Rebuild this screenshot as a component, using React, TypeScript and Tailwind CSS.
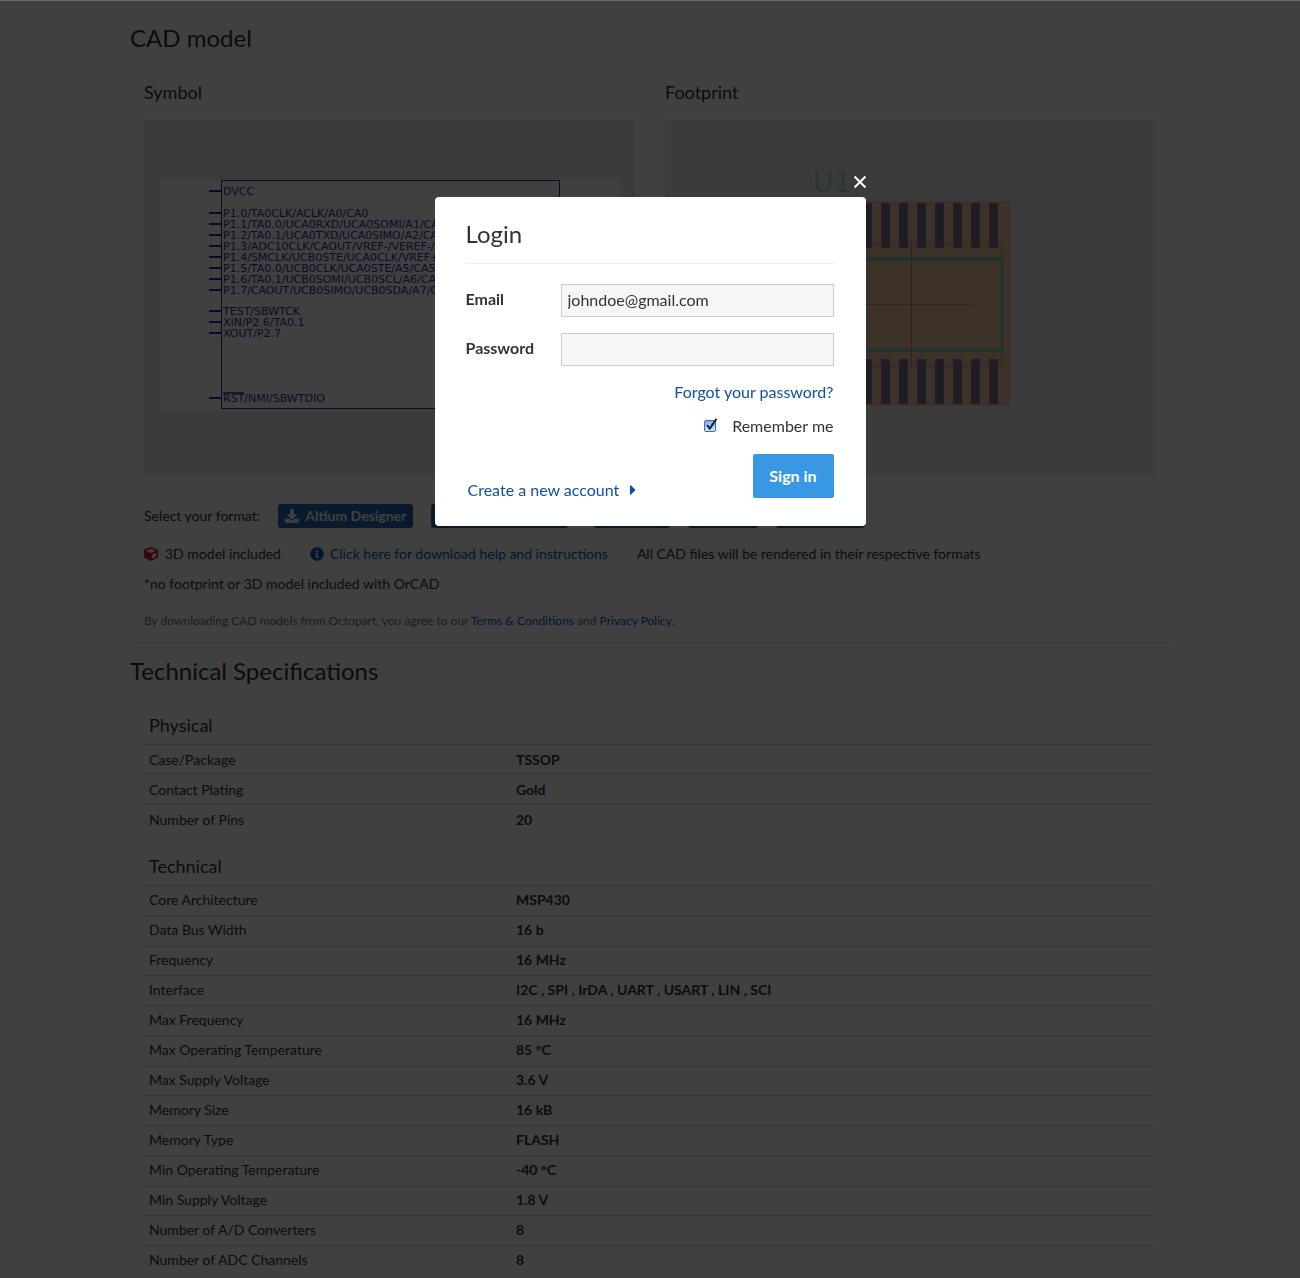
import { FaCaretRight, FaCube, FaDownload, FaInfoCircle } from "react-icons/fa";

const formats = [
  { name: "Altium Designer", className: "w-[135px]" },
  { name: "Cadence Allegro", className: "w-[137px] mr-2" },
  { name: "OrCAD", className: "w-[76px]" },
  { name: "KiCad", className: "w-[70px]" },
  { name: "Eagle", className: "w-[89px]" },
];

const specGroups = [
  {
    title: "Physical",
    rows: [
      ["Case/Package", "TSSOP"],
      ["Contact Plating", "Gold"],
      ["Number of Pins", "20"],
    ],
  },
  {
    title: "Technical",
    rows: [
      ["Core Architecture", "MSP430"],
      ["Data Bus Width", "16 b"],
      ["Frequency", "16 MHz"],
      ["Interface", "I2C , SPI , IrDA , UART , USART , LIN , SCI"],
      ["Max Frequency", "16 MHz"],
      ["Max Operating Temperature", "85 °C"],
      ["Max Supply Voltage", "3.6 V"],
      ["Memory Size", "16 kB"],
      ["Memory Type", "FLASH"],
      ["Min Operating Temperature", "-40 °C"],
      ["Min Supply Voltage", "1.8 V"],
      ["Number of A/D Converters", "8"],
      ["Number of ADC Channels", "8"],
    ],
  },
];

const pins = [
  { y: 72, label: "DVCC" },
  { y: 94, label: "P1.0/TA0CLK/ACLK/A0/CA0" },
  { y: 105, label: "P1.1/TA0.0/UCA0RXD/UCA0SOMI/A1/CA1" },
  { y: 116, label: "P1.2/TA0.1/UCA0TXD/UCA0SIMO/A2/CA2" },
  { y: 127, label: "P1.3/ADC10CLK/CAOUT/VREF-/VEREF-/A3/CA3" },
  { y: 138, label: "P1.4/SMCLK/UCB0STE/UCA0CLK/VREF+/VEREF+/A4/CA4" },
  { y: 149, label: "P1.5/TA0.0/UCB0CLK/UCA0STE/A5/CA5" },
  { y: 160, label: "P1.6/TA0.1/UCB0SOMI/UCB0SCL/A6/CA6" },
  { y: 171, label: "P1.7/CAOUT/UCB0SIMO/UCB0SDA/A7/CA7" },
  { y: 192, label: "TEST/SBWTCK" },
  { y: 203, label: "XIN/P2.6/TA0.1" },
  { y: 214, label: "XOUT/P2.7" },
  { y: 279, label: "RST/NMI/SBWTDIO" },
];

const pads = [36, 54, 72, 90, 108, 126, 144, 162, 180, 198].map((x) => x + 127);

const SymbolDrawing = () => (
  <svg viewBox="0 0 491 357" className="block w-full bg-[#ececec]" role="img" aria-label="Schematic symbol">
    <rect x="16" y="61" width="460" height="230" fill="#ffffff" />
    <rect x="77.5" y="61.5" width="338" height="228" fill="none" stroke="#28349c" />
    {pins.map((pin) => (
      <g key={pin.label}>
        <path d={`M65 ${pin.y}H78`} stroke="#202c98" strokeWidth="2" />
        <text x="79" y={pin.y + 4} fontSize="11" fill="#28349c" fontFamily="DejaVu Sans, sans-serif">
          {pin.label}
        </text>
      </g>
    ))}
    <path d="M79 274H100" stroke="#28349c" strokeWidth="1.5" />
  </svg>
);

const FootprintDrawing = () => (
  <svg viewBox="0 0 491 357" className="block w-full bg-[#ececec]" role="img" aria-label="PCB footprint">
    <text x="148" y="73" fontSize="28" fill="#a0dcd4" fontFamily="DejaVu Sans, sans-serif">
      U1
    </text>
    <rect x="145" y="82" width="200" height="205" fill="#f4c8a8" />
    <rect x="152" y="124" width="185" height="123" fill="none" stroke="#d4bc98" strokeWidth="4" />
    <rect x="152" y="140" width="185" height="91" fill="none" stroke="#8cc8a8" strokeWidth="4" />
    {pads.map((x) => (
      <g key={x} fill="#7c7490" stroke="#987090" strokeWidth="1">
        <rect x={x - 0.5} y="84.5" width="8" height="44" />
        <rect x={x - 0.5} y="240.5" width="8" height="44" />
      </g>
    ))}
    <path d="M185 185.500H308" stroke="#f47c78" />
    <path d="M246.500 124V247" stroke="#c87c74" />
  </svg>
);

const CadModel = () => (
  <section className="border-t border-[#e8e8e8] pt-2">
    <h2 className="text-2xl leading-8">CAD model</h2>
    <div className="px-[14px]">
      <div className="grid grid-cols-2 gap-[30px] pt-[23px]">
        <div>
          <h3 className="mb-3 text-lg leading-[30px]">Symbol</h3>
          <SymbolDrawing />
        </div>
        <div>
          <h3 className="mb-3 text-lg leading-[30px]">Footprint</h3>
          <FootprintDrawing />
        </div>
      </div>
      <div className="mt-7 flex items-center gap-[18px] text-sm leading-6">
        <span>Select your format:</span>
        {formats.map((format) => (
          <button
            key={format.name}
            type="button"
            className={`flex h-6 shrink-0 items-center justify-center gap-[6px] overflow-hidden rounded-[3px] bg-[#2468b8] font-bold whitespace-nowrap text-white ${format.className}`}
          >
            <FaDownload />
            {format.name}
          </button>
        ))}
      </div>
      <div className="mt-[11px] flex flex-wrap items-center gap-x-[29px] text-sm leading-[30px]">
        <span className="flex items-center gap-[7px]">
          <FaCube className="text-[#d81838]" />
          3D model included
        </span>
        <a href="#help" className="flex items-center gap-[6px] text-[#0f58b0]">
          <FaInfoCircle />
          Click here for download help and instructions
        </a>
        <span>All CAD files will be rendered in their respective formats</span>
      </div>
      <p className="text-sm leading-[30px]">*no footprint or 3D model included with OrCAD</p>
      <p className="pt-3 pb-4 text-xs leading-5 text-[#707070]">
        By downloading CAD models from Octopart, you agree to our{" "}
        <a href="#terms" className="text-[#0f58b0]">Terms &amp; Conditions</a> and{" "}
        <a href="#privacy" className="text-[#0f58b0]">Privacy Policy.</a>
      </p>
    </div>
  </section>
);

const TechnicalSpecs = () => (
  <section className="border-t border-[#e8e8e8] pt-[7px]">
    <h2 className="mb-[7px] text-2xl leading-8">Technical Specifications</h2>
    <div className="pr-4 pl-[14px]">
      {specGroups.map((group) => (
        <table key={group.title} className="w-full table-fixed text-left text-sm">
          <caption className="h-[50px] pt-4 pl-[5px] text-left text-lg leading-[30px]">{group.title}</caption>
          <tbody>
            {group.rows.map(([name, value]) => (
              <tr key={name} className="h-[30px] border-t border-[#d8d8d8]">
                <th scope="row" className="w-[367px] pl-[5px] font-normal">{name}</th>
                <td className="pl-[5px] font-bold">{value}</td>
              </tr>
            ))}
          </tbody>
        </table>
      ))}
    </div>
  </section>
);

const LoginDialog = () => (
  <div
    role="dialog"
    aria-modal="true"
    aria-labelledby="login-title"
    className="relative h-fit w-full max-w-[431px] rounded-[4px] bg-white pt-[21px] pr-8 pb-7 pl-[31px] text-base leading-6 shadow-sm"
  >
    <button type="button" aria-label="Close" className="absolute -top-[21px] right-0 text-white">
      <svg viewBox="0 0 12 12" className="h-3 w-3" stroke="currentColor" strokeWidth="2">
        <path d="M0.500 0.500L11.500 11.500M11.500 0.500L0.500 11.500" />
      </svg>
    </button>
    <h1 id="login-title" className="border-b border-[#eeeeee] pb-[13px] text-2xl leading-8">Login</h1>
    <form onSubmit={(e) => e.preventDefault()}>
      <div className="mt-5 flex items-start">
        <label htmlFor="email" className="w-[95px] leading-[30px] font-bold">Email</label>
        <input
          id="email"
          type="email"
          defaultValue="johndoe@gmail.com"
          className="h-[33px] min-w-0 flex-1 border border-[#cccccc] bg-[#f6f6f6] px-[6px] pb-[2px]"
        />
      </div>
      <div className="mt-4 flex items-start">
        <label htmlFor="password" className="w-[95px] leading-[30px] font-bold">Password</label>
        <input
          id="password"
          type="password"
          className="h-[33px] min-w-0 flex-1 border border-[#cccccc] bg-[#f6f6f6] px-[6px] pb-[2px]"
        />
      </div>
      <div className="mt-[14px] text-right">
        <a href="#forgot" className="text-[#0f4f9f]">Forgot your password?</a>
      </div>
      <div className="mt-[10px] flex items-center justify-end gap-4">
        <span className="relative h-[13px] w-3">
          <input
            id="remember"
            type="checkbox"
            defaultChecked
            className="block h-3 w-3 appearance-none rounded-[2px] border border-[#4a68a8] bg-gradient-to-b from-[#7db4ea] to-[#c4ecfc]"
          />
          <svg viewBox="0 0 14 14" className="pointer-events-none absolute -top-[2px] left-0 h-[14px] w-[14px]" fill="none" stroke="#1c2030" strokeWidth="2">
            <path d="M3 7L5.800 10.500L12.500 0.800" />
          </svg>
        </span>
        <label htmlFor="remember">Remember me</label>
      </div>
      <div className="mt-4 flex items-end justify-between">
        <a href="#register" className="flex items-center gap-[6px] pl-[2px] leading-3 text-[#0f4f9f]">
          Create a new account
          <FaCaretRight />
        </a>
        <button type="submit" className="h-11 w-[81px] rounded-[2px] bg-[#3998e4] font-bold text-white">
          Sign in
        </button>
      </div>
    </form>
  </div>
);

const App = () => {
  return (
    <div className="min-h-screen bg-white font-['Lato',sans-serif] text-[#333333]">
      <main className="mx-auto max-w-[1040px] pt-[13px]">
        <CadModel />
        <TechnicalSpecs />
      </main>

      {/* Dimmed backdrop with the login box on top */}
      <div className="fixed inset-0 flex justify-center border-t border-[#6c6c6c] bg-black/75 pt-[196px]">
        <LoginDialog />
      </div>
    </div>
  );
};

export default App;
